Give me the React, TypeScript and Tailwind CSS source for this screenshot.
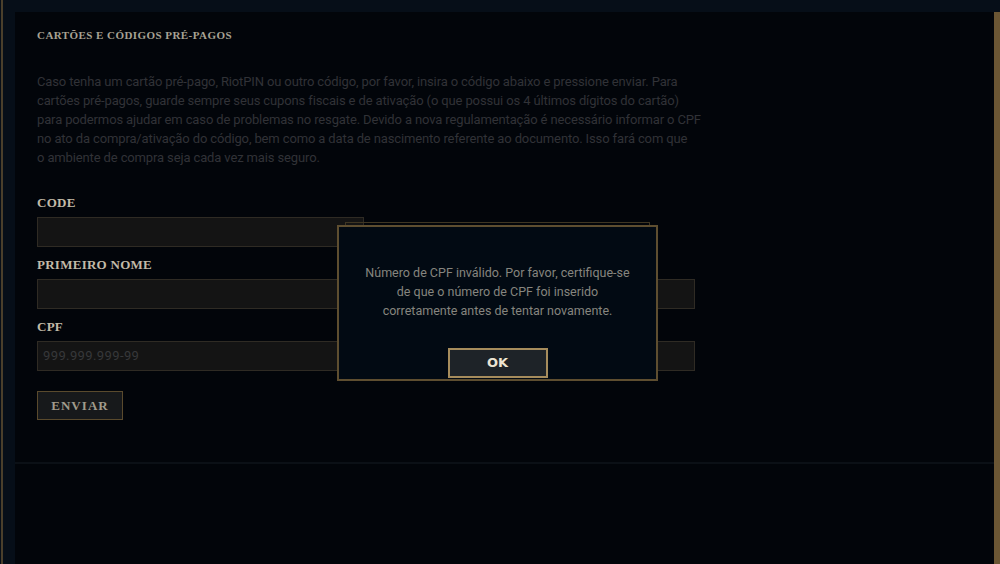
import React from 'react';

const paragraphLines = [
  'Caso tenha um cartão pré-pago, RiotPIN ou outro código, por favor, insira o código abaixo e pressione enviar. Para',
  'cartões pré-pagos, guarde sempre seus cupons fiscais e de ativação (o que possui os 4 últimos dígitos do cartão)',
  'para podermos ajudar em caso de problemas no resgate. Devido a nova regulamentação é necessário informar o CPF',
  'no ato da compra/ativação do código, bem como a data de nascimento referente ao documento. Isso fará com que',
  'o ambiente de compra seja cada vez mais seguro.',
];

const modalLines = [
  'Número de CPF inválido. Por favor, certifique-se',
  'de que o número de CPF foi inserido',
  'corretamente antes de tentar novamente.',
];

const serif = "font-['Liberation_Serif',serif]";
const sans = "font-['Roboto','Noto_Sans',sans-serif]";

const Field = ({ label, width, placeholder }: { label: string; width: string; placeholder?: string }) => (
  <div className="flex flex-col">
    <label className={`${serif} font-bold text-[13px] leading-[18px] tracking-[0.02em] text-[#c2baa8] mb-[5px]`}>
      {label}
    </label>
    <div className={`${width} h-[30px] bg-[#141414] border border-[#2f2b24] flex items-center px-[5px]`}>
      {placeholder && (
        <span className={`${sans} text-[13px] tracking-[0.03em] text-[#37383a]`}>{placeholder}</span>
      )}
    </div>
  </div>
);

const App = () => {
  return (
    <div className="relative flex w-[1000px] h-[564px] overflow-hidden bg-[#060e18]">
      {/* left gold edge */}
      <div className="w-[2px] h-full bg-[#4a3f2b] ml-[1px] mr-[12px]" />

      <div className="flex-1 flex flex-col pt-[12px]">
        <div className="flex-1 flex bg-[#02050a]">
          <div className="flex-1 flex flex-col">
            {/* form section */}
            <section className="h-[452px] border-b-2 border-[#0b1016] pl-[22px] pt-[15px]">
              <h2 className={`${serif} font-bold text-[11px] leading-[16px] tracking-[0.04em] text-[#a7a293]`}>
                CARTÕES E CÓDIGOS PRÉ-PAGOS
              </h2>

              <div className={`${sans} mt-[29px] text-[13px] leading-[19px] text-[#313237] tracking-[-0.01em]`}>
                {paragraphLines.map((line, i) => (
                  <p key={i} className="whitespace-nowrap">{line}</p>
                ))}
              </div>

              <div className="mt-[27px] flex flex-col gap-[9px]">
                <Field label="CODE" width="w-[327px]" />
                <Field label="PRIMEIRO NOME" width="w-[658px]" />
                <Field label="CPF" width="w-[658px]" placeholder="999.999.999-99" />
              </div>

              <button
                className={`${serif} mt-[20px] w-[86px] h-[29px] bg-[#17191b] border border-[#5a4a2d] font-bold text-[13px] tracking-[0.08em] text-[#a19b8b]`}
              >
                ENVIAR
              </button>
            </section>
          </div>
          {/* right gold edge */}
          <div className="w-[6px] bg-[#6b5634]" />
        </div>
      </div>

      {/* modal */}
      <div className="absolute left-[337px] top-[222px] w-[321px] h-[159px]">
        <div className="absolute left-[8px] right-[8px] top-0 h-[6px] border-t border-l border-r border-[#3f3623]" />
        <div className="absolute inset-x-0 top-[3px] bottom-0 bg-[#020a13] border-2 border-[#5e4e30] flex flex-col items-center">
          <div className={`${sans} mt-[36px] text-center text-[12.5px] leading-[19px] text-[#86857f]`}>
            {modalLines.map((line, i) => (
              <p key={i} className="whitespace-nowrap">{line}</p>
            ))}
          </div>
          <div className="mt-auto mb-[1px] relative">
            <button className="w-[100px] h-[30px] bg-[#1e2328] border-2 border-[#a68c5c] font-['DejaVu_Sans',sans-serif] font-bold text-[13px] text-[#ece4d2]">
              OK
            </button>
          </div>
        </div>
      </div>
    </div>
  );
};

export default App;
